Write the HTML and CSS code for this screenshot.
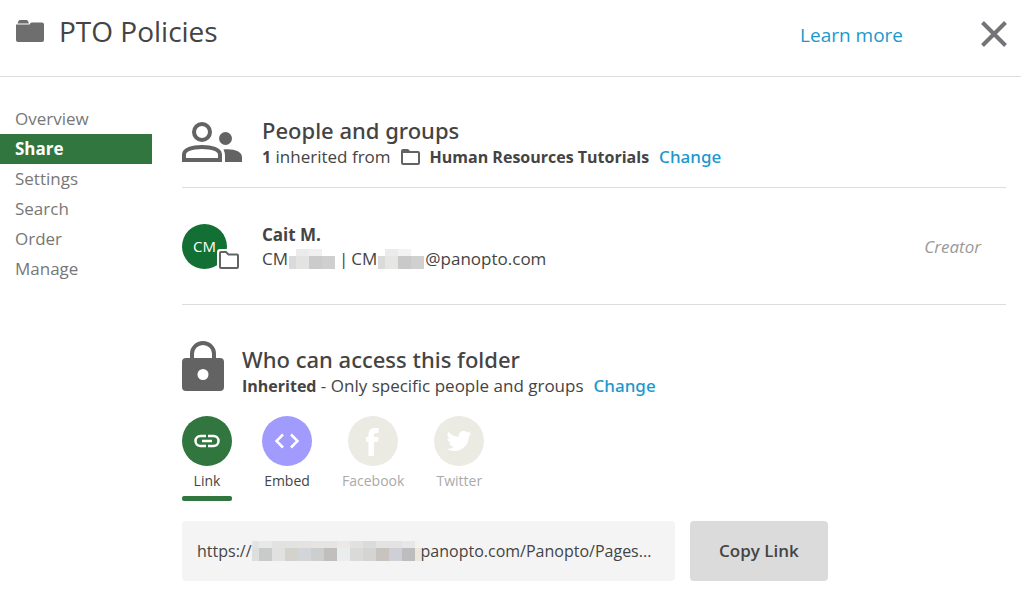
FILE: index.html
```html
<!DOCTYPE html>
<html lang="en">
  <head>
    <meta charset="utf-8" />
    <meta name="viewport" content="width=device-width, initial-scale=1" />
    <title>PTO Policies</title>
    <link rel="stylesheet" href="styles.css">
  </head>
  <body>
    <header class="header">
      <svg class="header-icon" width="28" height="22" viewBox="0 0 28 22" aria-hidden="true">
        <path fill="#6e6e6e" d="M1.500 3.500 2.500 1Q3 0 4 0h6.500q1 0 1.500 1l1 2.500zM0 4.500h13.500l1-1.500q.5-.5 1.500-.5h10q2 0 2 2V20q0 2-2 2H2q-2 0-2-2z" />
      </svg>
      <h1>PTO Policies</h1>
      <a class="learn-more" href="#">Learn more</a>
      <button class="close" type="button" aria-label="Close">
        <svg width="26" height="26" viewBox="0 0 26 26" aria-hidden="true">
          <path d="M1.500 1.500l23 23M24.500 1.500l-23 23" stroke="#747478" stroke-width="4" />
        </svg>
      </button>
    </header>

    <div class="layout">
      <nav class="menu">
        <a href="#">Overview</a>
        <a class="active" href="#">Share</a>
        <a href="#">Settings</a>
        <a href="#">Search</a>
        <a href="#">Order</a>
        <a href="#">Manage</a>
      </nav>

      <main>
        <section class="people">
          <svg width="60" height="40" viewBox="0 0 60 40" aria-hidden="true">
            <circle cx="20" cy="10" r="8" fill="none" stroke="#636363" stroke-width="4" />
            <path d="M2 38v-5.500C2 27.500 10 25 20 25s18 2.500 18 7.500V38z" fill="none" stroke="#636363" stroke-width="4" />
            <circle cx="43.500" cy="16.500" r="6.500" fill="#636363" />
            <path d="M41.500 27.500C52 26.500 60 29.500 60 35v5H43v-6q0-3.500-1.500-6.500z" fill="#636363" />
          </svg>
          <div>
            <h2>People and groups</h2>
            <p class="line">
              <span><b>1</b> inherited from</span>
              <svg class="folder" width="19" height="16" viewBox="0 0 19 16" aria-hidden="true">
                <path d="M0 2q0-2 2-2h5l2 2h8q2 0 2 2v10q0 2-2 2H2q-2 0-2-2zM2 4v10h15V4z" fill="#636363" fill-rule="evenodd" />
              </svg>
              <b>Human Resources Tutorials</b>
              <a class="change" href="#">Change</a>
            </p>
          </div>
        </section>

        <section class="person">
          <div class="avatar">
            CM
            <svg class="avatar-badge" width="23" height="20" viewBox="0 0 23 20" aria-hidden="true">
              <path d="M0 3q0-3 3-3h7l3 2h7q3 0 3 3v15H0z" fill="#fff" />
              <path d="M3 4q0-1 1-1h5l2.500 2.500H20q1 0 1 1V18q0 1-1 1H4q-1 0-1-1z" fill="#fff" stroke="#636363" stroke-width="2" />
            </svg>
          </div>
          <div class="person-text">
            <h3>Cait M.</h3>
            <p class="line">
              <span>CM</span>
              <svg class="hidden-name" width="46" height="20" viewBox="0 0 46 20" aria-hidden="true">
                <path d="M7 0h13v7H7z" fill="#ebebeb" /><path d="M20 0h13v7H20z" fill="#f0f0f0" />
                <path d="M0 7h7v13H0z" fill="#d9dadb" /><path d="M7 7h13v13H7z" fill="#e3e3e2" />
                <path d="M20 7h13v13H20z" fill="#cbcbcb" /><path d="M33 7h13v13H33z" fill="#cfcfcf" />
              </svg>
              <span class="bar">|</span>
              <span>CM</span>
              <svg class="hidden-name" width="46" height="20" viewBox="0 0 46 20" aria-hidden="true">
                <path d="M7 0h13v7H7z" fill="#ebebeb" /><path d="M20 0h13v7H20z" fill="#f3f3f3" />
                <path d="M0 7h7v13H0z" fill="#dadada" /><path d="M7 7h13v13H7z" fill="#e6e6e5" />
                <path d="M20 7h13v13H20z" fill="#c9c9c9" /><path d="M33 7h13v13H33z" fill="#d0d0d0" />
              </svg>
              <span>@panopto.com</span>
            </p>
          </div>
          <em class="role">Creator</em>
        </section>

        <section class="access">
          <svg width="42" height="50" viewBox="0 0 42 50" aria-hidden="true">
            <path d="M10 18v-5.500a11 10.500 0 0 1 22 0V18" fill="none" stroke="#636363" stroke-width="4" />
            <rect y="17" width="42" height="33" rx="4" fill="#636363" />
            <circle cx="21" cy="33.500" r="5.500" fill="#fff" />
          </svg>
          <div class="access-text">
            <h2>Who can access this folder</h2>
            <p class="line">
              <span><b>Inherited</b> - Only specific people and groups</span>
              <a class="change" href="#">Change</a>
            </p>
          </div>
        </section>

        <div class="tabs">
          <button class="tab selected" type="button">
            <svg width="50" height="50" viewBox="0 0 50 50" aria-hidden="true">
              <circle cx="25" cy="25" r="25" fill="#31753f" />
              <path d="M24 20h-5.500a5 5 0 0 0 0 10H24M26 20h5.500a5 5 0 0 1 0 10H26M20 25h10" fill="none" stroke="#fff" stroke-width="2.500" />
            </svg>
            Link
          </button>
          <button class="tab" type="button">
            <svg width="50" height="50" viewBox="0 0 50 50" aria-hidden="true">
              <circle cx="25" cy="25" r="25" fill="#a29bfe" />
              <path d="M21 18.500 14.500 25l6.500 6.500M29 18.500l6.500 6.500-6.500 6.500" fill="none" stroke="#fff" stroke-width="2.500" />
            </svg>
            Embed
          </button>
          <button class="tab" type="button" disabled>
            <svg width="50" height="50" viewBox="0 0 50 50" aria-hidden="true">
              <circle cx="25" cy="25" r="25" fill="#ebebe4" />
              <path d="M20.500 40V26H18v-5h2.500v-2.500c0-4 2-6.500 6.500-6.500h3.500v5H28q-2 0-2 2v2h4.500l-.5 5h-4v14z" fill="#fff" />
            </svg>
            Facebook
          </button>
          <button class="tab" type="button" disabled>
            <svg width="50" height="50" viewBox="0 0 50 50" aria-hidden="true">
              <circle cx="25" cy="25" r="25" fill="#ebebe4" />
              <path transform="translate(12.500 12.500) scale(1.040)" d="M23.950 4.570a10 10 0 0 1-2.820.78 4.960 4.960 0 0 0 2.160-2.720c-.95.550-2 .960-3.130 1.180a4.920 4.920 0 0 0-8.380 4.480C7.690 8.100 4.070 6.130 1.640 3.160a4.920 4.920 0 0 0 1.520 6.570 4.900 4.900 0 0 1-2.230-.61v.06a4.920 4.920 0 0 0 3.950 4.830 5 5 0 0 1-2.210.08 4.940 4.940 0 0 0 4.600 3.420A9.870 9.870 0 0 1 0 19.540a14 14 0 0 0 7.550 2.210c9.050 0 14-7.500 14-13.980 0-.21 0-.42-.02-.63a9.940 9.940 0 0 0 2.460-2.550z" fill="#fff" />
            </svg>
            Twitter
          </button>
        </div>

        <div class="share-link">
          <div class="url">
            <label for="url">https://</label>
            <svg width="169" height="20" viewBox="0 0 169 20" aria-hidden="true">
              <path d="M0 0h7v7H0z" fill="#e2e3e7" /><path d="M7 0h13v7H7z" fill="#e6e9e8" />
              <path d="M20 0h26v7H20z" fill="#e2e2e3" /><path d="M46 0h13v7H46z" fill="#e5e3df" />
              <path d="M59 0h26v7H59z" fill="#e6e5e4" /><path d="M85 0h13v7H85z" fill="#ece8e7" />
              <path d="M98 0h13v7H98z" fill="#dfe2e0" /><path d="M111 0h13v7h-13z" fill="#dadbdb" />
              <path d="M124 0h26v7h-26z" fill="#e3e3e4" /><path d="M150 0h13v7h-13z" fill="#e7e7e8" />
              <path d="M163 0h6v7h-6z" fill="#f5f2ed" />
              <path d="M0 7h7v13H0z" fill="#dcdfde" /><path d="M7 7h13v13H7z" fill="#cacacb" />
              <path d="M20 7h13v13H20z" fill="#e1e1e2" /><path d="M33 7h13v13H33z" fill="#d3d2cb" />
              <path d="M46 7h13v13H46z" fill="#d2d6d8" /><path d="M59 7h13v13H59z" fill="#cdcfce" />
              <path d="M72 7h13v13H72z" fill="#c1bfbd" /><path d="M85 7h13v13H85z" fill="#e9edee" />
              <path d="M98 7h13v13H98z" fill="#dadad9" /><path d="M111 7h13v13h-13z" fill="#d4d4d5" />
              <path d="M124 7h13v13h-13z" fill="#c9c3bf" /><path d="M137 7h13v13h-13z" fill="#cfcfd8" />
              <path d="M150 7h13v13h-13z" fill="#bdbdbd" /><path d="M163 7h6v13h-6z" fill="#ece7db" />
            </svg>
            <input type="text" id="url" value="panopto.com/Panopto/Pages..." readonly />
          </div>
          <button class="copy" type="button">Copy Link</button>
        </div>
      </main>
    </div>
  </body>
</html>
```

FILE: styles.css
```css
body {
  margin: 0;
  background-color: #fff;
  color: #444;
  font-family: "Segoe UI", "Open Sans", "Noto Sans", sans-serif;
  font-size: 17px;
  line-height: 24px;
}
h1,
h2,
h3,
p {
  margin: 0;
}
a {
  text-decoration: none;
}
button {
  border: 0;
  padding: 0;
  font: inherit;
  color: inherit;
  cursor: pointer;
}
svg {
  display: block;
  flex: none;
}
.header {
  display: flex;
  align-items: center;
  height: 76px;
  padding: 0 14px 0 16px;
  border-bottom: 1px solid #ddd;
}
.header-icon {
  margin-bottom: 14px;
}
h1 {
  margin: 0 auto 14px 15px;
  font-size: 28px;
  line-height: 40px;
  font-weight: 400;
}
.learn-more {
  margin: 0 78px 6px 0;
  font-size: 19px;
  color: #1b98cd;
}
.close {
  margin-bottom: 8px;
  background: none;
}
.layout {
  display: grid;
  grid-template-columns: 152px 1fr;
}
.menu {
  padding-top: 27px;
}
.menu a {
  display: block;
  padding-left: 15px;
  line-height: 30px;
  color: #777;
}
.menu .active {
  background-color: #31753f;
  color: #fff;
  font-weight: 700;
}
main {
  padding: 0 15px 20px 30px;
}
section {
  display: flex;
  align-items: center;
}
h2 {
  font-family: "Segoe UI", "Noto Sans", sans-serif;
  font-size: 22px;
  line-height: 30px;
  font-weight: 500;
}
h3 {
  font-size: 17px;
  line-height: 24px;
  font-weight: 700;
}
.line {
  display: flex;
  align-items: center;
  white-space: nowrap;
}
.line b {
  font-size: 16px;
}
.people {
  gap: 20px;
  padding: 38px 0 18px;
  border-bottom: 1px solid #ddd;
}
.folder {
  margin: 0 10px;
}
.change {
  margin-left: 10px;
  color: #1b98cd;
  font-family: "Segoe UI", "Noto Sans", sans-serif;
  font-weight: 500;
}
.person {
  padding: 35px 25px 33px 0;
  border-bottom: 1px solid #ddd;
}
.avatar {
  position: relative;
  width: 45px;
  margin: 0 35px 2px 0;
  border-radius: 50%;
  background-color: #127034;
  color: #fff;
  font-size: 15px;
  line-height: 45px;
  text-align: center;
}
.avatar-badge {
  position: absolute;
  right: -13px;
  bottom: 0;
}
.hidden-name {
  margin: 0 1px;
}
.bar {
  margin: 0 3px;
}
.role {
  margin-left: auto;
  color: #999;
}
.access {
  align-items: flex-start;
  gap: 18px;
  padding: 36px 0 18px;
}
.access-text {
  padding-top: 3px;
}
.tabs {
  display: flex;
  gap: 30px;
}
.tab {
  display: flex;
  flex-direction: column;
  align-items: center;
  gap: 4px;
  min-width: 50px;
  background: none;
  font-size: 14px;
  line-height: 22px;
}
.tab:disabled {
  color: #aaa;
  cursor: default;
}
.selected::after {
  content: "";
  width: 50px;
  height: 5px;
  border-radius: 2px;
  background-color: #31753f;
}
.share-link {
  display: flex;
  gap: 15px;
  margin-top: 20px;
}
.url {
  display: flex;
  align-items: center;
  flex: 0 1 463px;
  height: 60px;
  padding: 0 15px;
  border-radius: 4px;
  background-color: #f4f4f4;
  font-size: 16px;
}
.url input {
  flex: 1;
  min-width: 0;
  padding: 0;
  border: 0;
  background: none;
  color: inherit;
  font: inherit;
}
.copy {
  padding: 0 29px;
  border-radius: 4px;
  background-color: #dbdbdb;
  font-weight: 600;
}
```
